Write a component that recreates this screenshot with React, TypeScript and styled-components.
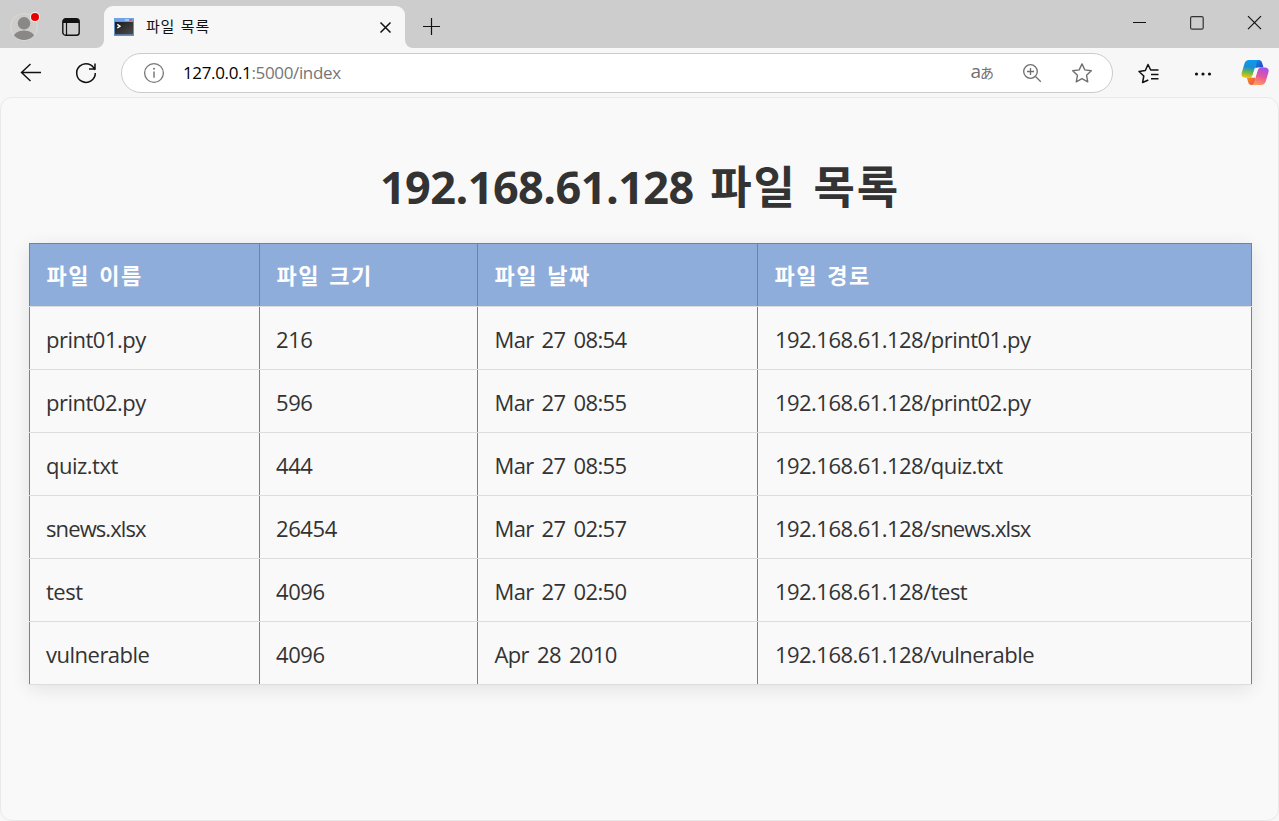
import React from "react";
import styled, { createGlobalStyle } from "styled-components";

const GlobalStyle = createGlobalStyle`
  * { box-sizing: border-box; }
  body {
    margin: 0;
    background: #f7f7f7;
    font-family: "Open Sans", "Noto Sans CJK KR", sans-serif;
  }
`;

const Browser = styled.div`
  display: flex;
  flex-direction: column;
  width: 1279px;
  height: 821px;
  overflow: hidden;
  background: #f7f7f7;
`;

const TabStrip = styled.header`
  display: flex;
  flex: none;
  height: 48px;
  background: #cdcdcd;
`;

const StripTools = styled.div`
  width: 96px;
  padding: 9px 0 0 7px;
  display: flex;
  gap: 21px;
`;

const TabCorner = styled.svg`
  width: 8px;
  height: 8px;
  align-self: flex-end;
`;

const Tab = styled.div`
  display: flex;
  align-items: center;
  width: 301px;
  margin-top: 6px;
  padding: 0 12px 0 10px;
  border-radius: 9px 9px 0 0;
  background: #f7f7f7;
`;

const TabTitle = styled.span`
  flex: 1;
  margin-left: 12px;
  padding-bottom: 3px;
  font-family: "Noto Sans CJK KR", sans-serif;
  font-size: 15px;
  line-height: 20px;
  letter-spacing: 0.8px;
  word-spacing: 1.5px;
  color: #111;
`;

const NewTab = styled.div`
  padding: 17px 0 0 9px;
  flex: 1;
`;

const WindowControls = styled.div`
  display: flex;
  padding-top: 13px;
  padding-right: 14px;
  gap: 38px;
`;

const Toolbar = styled.div`
  display: flex;
  flex: none;
  align-items: center;
  height: 49px;
  padding-left: 19px;
`;

const NavButtons = styled.div`
  display: flex;
  gap: 31px;
  width: 102px;
`;

const AddressBar = styled.div`
  display: flex;
  align-items: center;
  width: 992px;
  height: 40px;
  margin-top: 1px;
  padding: 0 19px 0 21px;
  border: 1px solid #cbcbcb;
  border-radius: 20px;
  background: #fff;
`;

const Url = styled.span`
  flex: 1;
  margin-left: 18px;
  font-size: 17px;
  line-height: 24px;
  letter-spacing: -0.36px;
  color: #767676;
`;

const Host = styled.span`
  color: #000;
`;

const Translate = styled.span`
  display: flex;
  align-items: baseline;
  margin-right: 27px;
  padding-bottom: 3px;
  font-family: "Open Sans", "Noto Sans CJK JP", sans-serif;
  color: #6f6f6f;
  font-size: 19px;
  line-height: 20px;
`;

const Kana = styled.span`
  margin-left: -1px;
  font-size: 14px;
`;

const AddressIcons = styled.div`
  display: flex;
  gap: 28px;
`;

const ToolbarActions = styled.div`
  display: flex;
  align-items: center;
  margin-left: 24px;
  gap: 34px;
`;

const CopilotButton = styled.div`
  display: flex;
  margin-left: -5px;
`;

const Page = styled.main`
  flex: 1;
  border: 1px solid #e9e9e9;
  border-radius: 12px;
  background: #f9f9f9;
  padding: 54px 27px 0 28px;
`;

const Title = styled.h1`
  margin: 0 0 21px;
  font-size: 45px;
  line-height: 70px;
  font-weight: 700;
  letter-spacing: 1.9px;
  word-spacing: 3px;
  text-align: center;
  color: #333;
`;

const Address = styled.span`
  letter-spacing: -0.55px;
`;

const Table = styled.table`
  display: block;
  width: 1223px;
  box-shadow: 0 4px 17px rgba(20, 25, 40, 0.1);
  thead, tbody { display: block; }
`;

const Row = styled.tr<{ $head?: boolean }>`
  display: grid;
  grid-template-columns: 230px 218px 280px 495px;
  height: ${(p) => (p.$head ? 64 : 63)}px;
  border-top: ${(p) => (p.$head ? "1px solid #808080" : "0")};
  border-bottom: 1px solid #ddd;
  background: ${(p) => (p.$head ? "#8faddb" : "#f9f9f9")};
`;

const HeadCell = styled.th`
  padding: 0 16.5px;
  border-left: 1px solid #808080;
  font-size: 22px;
  line-height: 62px;
  font-weight: 700;
  text-align: left;
  letter-spacing: 1.5px;
  word-spacing: 2px;
  color: #fff;
  &:last-child { border-right: 1px solid #808080; }
`;

const Cell = styled.td<{ $tracking?: number; $indent?: number }>`
  padding: 3px 0 0 ${(p) => p.$indent ?? 16}px;
  border-left: 1px solid #808080;
  font-size: 22px;
  line-height: 59px;
  letter-spacing: ${(p) => p.$tracking ?? -0.4}px;
  word-spacing: 3px;
  color: #333;
  &:last-child { border-right: 1px solid #808080; }
`;

const FileName = styled.span<{ $tight: boolean }>`
  letter-spacing: ${(p) => (p.$tight ? -0.9 : -0.5)}px;
`;

const columns = ["파일 이름", "파일 크기", "파일 날짜", "파일 경로"];

const files = [
  ["print01.py", "216", "Mar 27 08:54"],
  ["print02.py", "596", "Mar 27 08:55"],
  ["quiz.txt", "444", "Mar 27 08:55"],
  ["snews.xlsx", "26454", "Mar 27 02:57"],
  ["test", "4096", "Mar 27 02:50"],
  ["vulnerable", "4096", "Apr 28 2010"],
];

const Avatar = () => (
  <svg width="34" height="34" viewBox="0 0 34 34">
    <defs><clipPath id="face"><circle cx="17" cy="18" r="13" /></clipPath></defs>
    <circle cx="17" cy="18" r="13.4" fill="#cfcdca" stroke="#dedad5" />
    <g clipPath="url(#face)" fill="#8a8886">
      <circle cx="17" cy="14.3" r="6.2" />
      <ellipse cx="17" cy="29" rx="11" ry="7.5" />
    </g>
    <circle cx="28" cy="8" r="5" fill="#f3f3f3" />
    <circle cx="28" cy="8" r="4" fill="#e60000" />
  </svg>
);

const ActionsSvg = styled.svg`
  margin-top: 9px;
`;

const TabActions = () => (
  <ActionsSvg width="18" height="18" viewBox="0 0 18 18">
    <rect x="0.8" y="0.8" width="16.4" height="16.4" rx="2.8" fill="none" stroke="#111" strokeWidth="1.4" />
    <path d="M1 5V3.5A2.5 2.5 0 0 1 3.5 1h11A2.5 2.5 0 0 1 17 3.5V5Z" fill="#111" />
    <path d="M4.5 5v12" stroke="#111" strokeWidth="1.2" />
  </ActionsSvg>
);

const TerminalIcon = () => (
  <svg width="20" height="18" viewBox="0 0 20 18">
    <defs>
      <linearGradient id="screen" x1="0" y1="0" x2="1" y2="1">
        <stop offset="0" stopColor="#1c1c1c" /><stop offset="1" stopColor="#4b4b4b" />
      </linearGradient>
    </defs>
    <rect width="20" height="18" fill="#628fce" />
    <rect y="0" width="20" height="3.5" fill="#6fa2e6" />
    <rect x="11" y="1.3" width="4" height="1.3" fill="#c8d8ee" />
    <rect x="15.5" y="1" width="2.6" height="1.8" fill="#e05a4a" />
    <rect x="1" y="4" width="18" height="12.3" fill="url(#screen)" />
    <path d="M3.3 6.4 6 8.2 3.3 10" fill="none" stroke="#fff" strokeWidth="1.4" />
  </svg>
);

const Copilot = () => (
  <svg width="28" height="27" viewBox="0 0 28 27">
    <defs>
      <linearGradient id="cpA" x1="0.5" y1="0" x2="0.35" y2="1">
        <stop offset="0" stopColor="#0a9af0" /><stop offset="0.4" stopColor="#1b8fd4" />
        <stop offset="0.7" stopColor="#6cb84a" /><stop offset="1" stopColor="#f5c50a" />
      </linearGradient>
      <linearGradient id="cpB" x1="0.7" y1="0" x2="0.4" y2="1">
        <stop offset="0" stopColor="#a04ff0" /><stop offset="0.5" stopColor="#e8569b" />
        <stop offset="1" stopColor="#ff9a5c" />
      </linearGradient>
      <linearGradient id="cpC" x1="0" y1="0" x2="1" y2="1">
        <stop offset="0" stopColor="#1a8de0" /><stop offset="1" stopColor="#2137c8" />
      </linearGradient>
      <linearGradient id="cpD" x1="0" y1="0" x2="1" y2="1">
        <stop offset="0" stopColor="#f4a01c" /><stop offset="1" stopColor="#f04a4a" />
      </linearGradient>
    </defs>
    <path d="M14 1h3.8c1.8 0 2.7 1 3.2 2.6l1.5 5H18c-2 0-3.1 1-3.7 2.8Z" fill="url(#cpC)" />
    <path d="M14 26h-3.5c-1.8 0-2.8-1-3.3-2.7l-1.5-5h4.5c2 0 3.1-1 3.8-2.8Z" fill="url(#cpD)" />
    <path d="M8 1h10c-1.6.4-2.2 1.6-2.8 3.5l-3.4 11c-.6 2-1.6 3.2-3.8 3.2H4.5C1 18.7 0 16.5.8 13.6L3.5 4.5C4.2 2.2 5.6 1 8 1Z" fill="url(#cpA)" />
    <path d="M20 26H10.5c1.6-.4 2.2-1.6 2.8-3.5l3.2-10.700c.6-2 1.700-3.200 3.900-3.200h3.400c3.400 0 4.400 2.100 3.600 5l-2.700 8.900C24 24.800 22.400 26 20 26Z" fill="url(#cpB)" />
    <path d="M15.600 8.700h3.200c-1.300.5-1.900 1.600-2.400 3.100l-1.700 5.600c-.3.900-.8 1.400-1.700 1.400H10c1-.5 1.500-1.500 1.900-2.700l1.900-6c.3-.9.900-1.400 1.800-1.400Z" fill="#f7f7f7" />
  </svg>
);

const STAR = "M10 1.3l2.7 5.7 6.2.85-4.55 4.35 1.15 6.2L10 15.4l-5.5 3 1.15-6.2L1.1 7.85 7.3 7Z";

export default function App() {
  return (
    <Browser>
      <GlobalStyle />
      <TabStrip>
        <StripTools><Avatar /><TabActions /></StripTools>
        <TabCorner viewBox="0 0 8 8"><path d="M8 0v8H0a8 8 0 0 0 8-8Z" fill="#f7f7f7" /></TabCorner>
        <Tab>
          <TerminalIcon />
          <TabTitle>파일 목록</TabTitle>
          <svg width="15" height="12" viewBox="0 0 15 12">
            <path d="M2.5 1.5l10 10M12.5 1.5l-10 10" stroke="#111" strokeWidth="1.5" />
          </svg>
        </Tab>
        <TabCorner viewBox="0 0 8 8"><path d="M0 0v8h8A8 8 0 0 1 0 0Z" fill="#f7f7f7" /></TabCorner>
        <NewTab>
          <svg width="18" height="18" viewBox="0 0 18 18">
            <path d="M9.5 1v17M1 9.5h17" stroke="#111" strokeWidth="1.2" />
          </svg>
        </NewTab>
        <WindowControls>
          <svg width="20" height="20" viewBox="0 0 20 20"><path d="M4 9.5h13" stroke="#111" /></svg>
          <svg width="20" height="20" viewBox="0 0 20 20">
            <rect x="3.6" y="3.6" width="12.6" height="12.6" rx="1.5" fill="none" stroke="#333" strokeWidth="1.2" />
          </svg>
          <svg width="20" height="20" viewBox="0 0 20 20"><path d="M3 3.2l13 13M16 3.2l-13 13" stroke="#111" strokeWidth="1.2" /></svg>
        </WindowControls>
      </TabStrip>
      <Toolbar>
        <NavButtons>
          <svg width="24" height="24" viewBox="0 0 24 24" fill="none" stroke="#111" strokeWidth="1.4">
            <path d="M22 11.5H2.5M11.5 3L2.5 11.5l9 8.5" />
          </svg>
          <svg width="24" height="24" viewBox="0 0 24 24" fill="none" stroke="#111" strokeWidth="1.5">
            <path d="M20.8 9A9.3 9.3 0 1 0 21.3 12M21 2.5V8h-6" />
          </svg>
        </NavButtons>
        <AddressBar>
          <svg width="22" height="22" viewBox="0 0 22 22" fill="none" stroke="#777">
            <circle cx="11" cy="11" r="9.4" strokeWidth="1.3" />
            <path d="M11 9.5v6.3" strokeWidth="1.5" />
            <circle cx="11" cy="6.8" r="1" fill="#777" stroke="none" />
          </svg>
          <Url><Host>127.0.0.1</Host>:5000/index</Url>
          <Translate>a<Kana>あ</Kana></Translate>
          <AddressIcons>
            <svg width="22" height="22" viewBox="0 0 22 22" fill="none" stroke="#6f6f6f" strokeWidth="1.3">
              <circle cx="9.5" cy="9.5" r="6.8" /><path d="M14.5 14.5l5.3 5.3M9.5 6v7M6 9.5h7" />
            </svg>
            <svg width="22" height="22" viewBox="-0.5 -0.5 21 21" fill="none" stroke="#6f6f6f" strokeWidth="1.3" strokeLinejoin="round">
              <path d={STAR} />
            </svg>
          </AddressIcons>
        </AddressBar>
        <ToolbarActions>
          <svg width="23" height="22" viewBox="0 0 23 22" fill="none" stroke="#111" strokeWidth="1.5" strokeLinejoin="round">
            <path d="M11.3 18L5.6 20.5l1.200-6.500L2 9.500l6.300-1L11 2.500l2.700 5.500h7.800M14 12.500h7.500M14 16.800h7.500" />
          </svg>
          <svg width="18" height="22" viewBox="0 0 18 22" fill="#111">
            <circle cx="2.5" cy="12" r="1.6" /><circle cx="9" cy="12" r="1.6" /><circle cx="15.5" cy="12" r="1.6" />
          </svg>
          <CopilotButton><Copilot /></CopilotButton>
        </ToolbarActions>
      </Toolbar>
      <Page>
        <Title><Address>192.168.61.128</Address> 파일 목록</Title>
        <Table>
          <thead>
            <Row $head>{columns.map((c) => <HeadCell key={c}>{c}</HeadCell>)}</Row>
          </thead>
          <tbody>
            {files.map(([name, size, date]) => (
              <Row key={name}>
                <Cell><FileName $tight={name.endsWith("xlsx")}>{name}</FileName></Cell>
                <Cell>{size}</Cell>
                <Cell $tracking={-0.65} $indent={16.5}>{date}</Cell>
                <Cell $tracking={-0.54} $indent={17}>
                  192.168.61.128/<FileName $tight={name.endsWith("xlsx")}>{name}</FileName>
                </Cell>
              </Row>
            ))}
          </tbody>
        </Table>
      </Page>
    </Browser>
  );
}
